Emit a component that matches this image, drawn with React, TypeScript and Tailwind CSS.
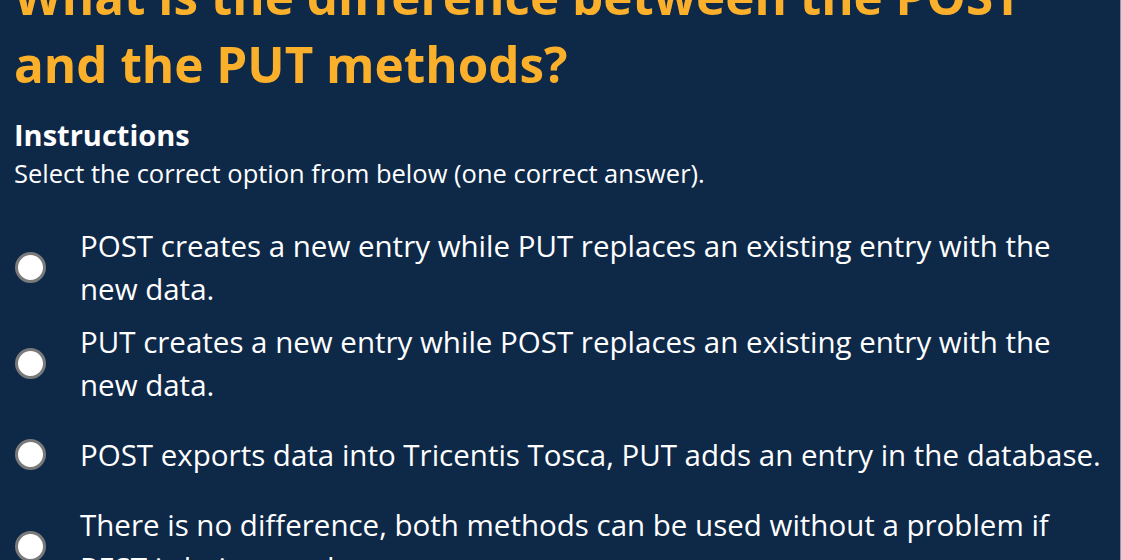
import React from "react";

const options = [
  "POST creates a new entry while PUT replaces an existing entry with the new data.",
  "PUT creates a new entry while POST replaces an existing entry with the new data.",
  "POST exports data into Tricentis Tosca, PUT adds an entry in the database.",
  "There is no difference, both methods can be used without a problem if REST is being used.",
];

const App = () => {
  return (
    <div
      className="h-[560px] w-full overflow-hidden bg-[#0e2848] border-r border-[#8a9bb0]"
      style={{ fontFamily: "'Open Sans', sans-serif" }}
    >
      <div className="-mt-[38px] pl-[14px] pr-[12px]">
        <h1 className="text-[49.4px] leading-[68px] font-bold text-[#fbb02c]">
          What is the difference between the POST and the PUT methods?
        </h1>
        <h2 className="mt-[19px] text-[29px] leading-[36px] font-bold text-white">Instructions</h2>
        <p className="mt-[3px] text-[25.5px] leading-[34px] text-white">
          Select the correct option from below (one correct answer).
        </p>
        <div className="mt-[34px] flex flex-col gap-[10px]">
          {options.map((opt, i) => (
            <label key={i} className="flex min-h-[77px] items-center cursor-pointer">
              <span className="w-[66px] shrink-0 flex justify-start pl-[1px]">
                <span className="block h-[31px] w-[31px] rounded-full bg-white border-[3px] border-[#7a7a7a]" />
              </span>
              <span className="text-[29.5px] leading-[43px] text-white">{opt}</span>
            </label>
          ))}
        </div>
      </div>
    </div>
  );
};

export default App;
